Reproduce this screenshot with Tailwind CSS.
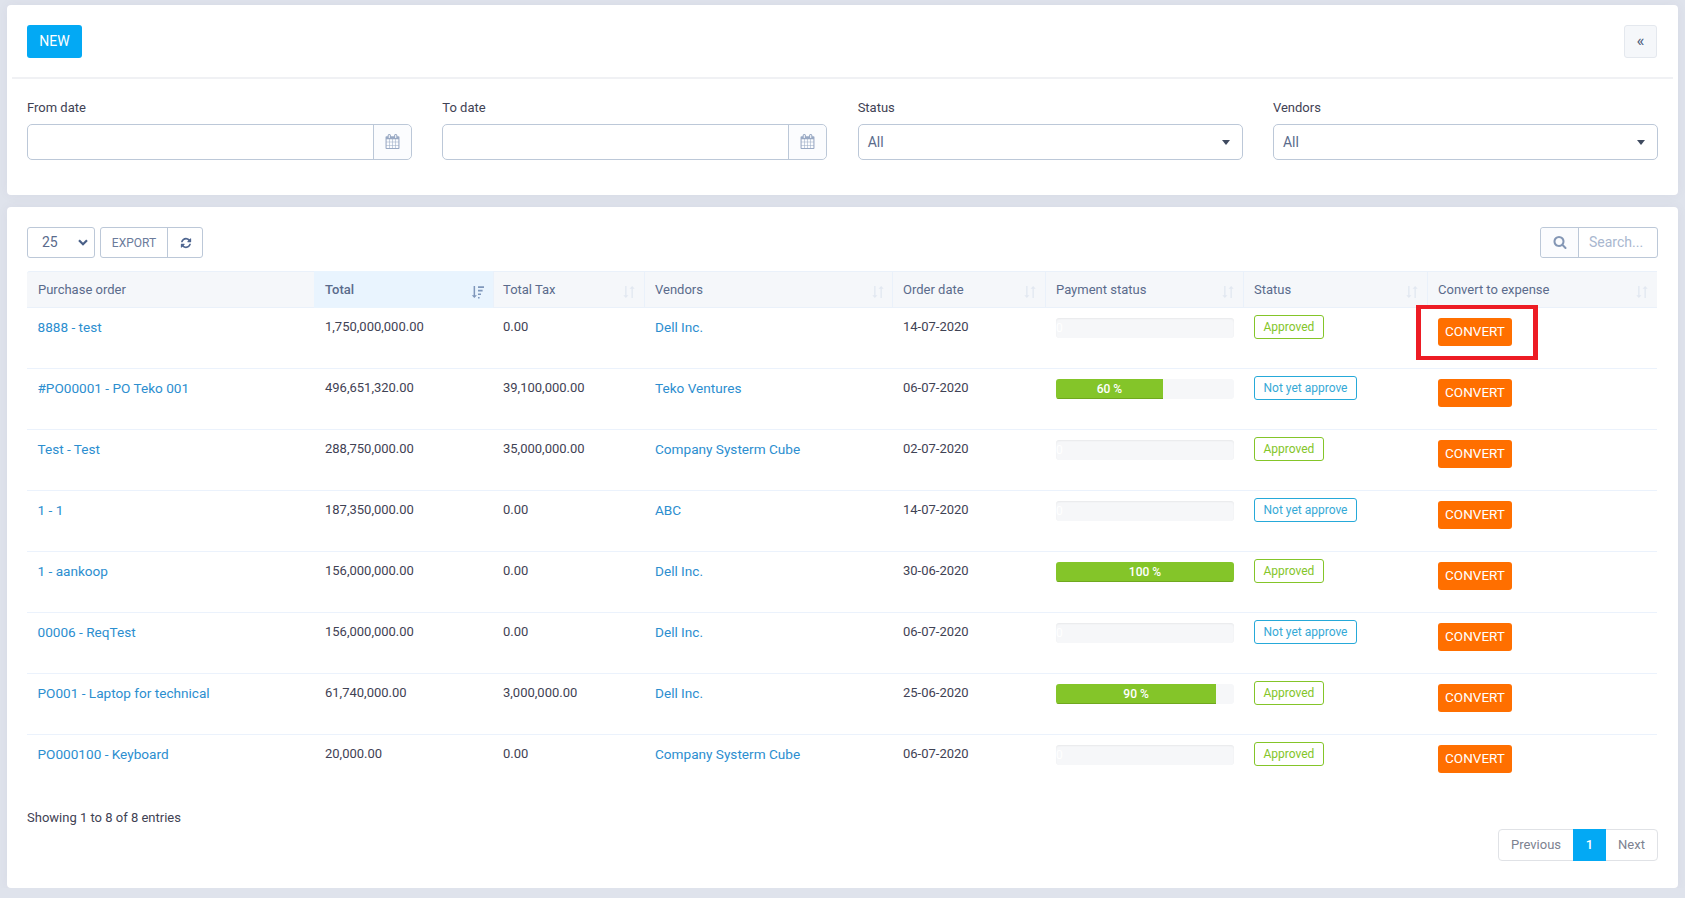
<!DOCTYPE html>
<html>
<head>
<meta charset="utf-8">
<script src="https://cdn.jsdelivr.net/npm/@tailwindcss/browser@4"></script>
<title>Purchase orders</title>
</head>
<body class="bg-[#dfe3ec] font-['Roboto',sans-serif] text-[13px] text-[#3f4254]">
<svg class="hidden" aria-hidden="true">
  <symbol id="cal" viewBox="0 0 1792 1792"><path d="M192 1664h288v-288h-288v288zm352 0h320v-288h-320v288zm-352-352h288v-320h-288v320zm352 0h320v-320h-320v320zm-352-384h288v-288h-288v288zm736 736h320v-288h-320v288zm-384-736h320v-288h-320v288zm768 736h288v-288h-288v288zm-384-352h320v-320h-320v320zm-352-864v-288q0-13-9.5-22.5t-22.5-9.5h-64q-13 0-22.5 9.5t-9.5 22.5v288q0 13 9.5 22.5t22.5 9.5h64q13 0 22.5-9.5t9.5-22.5zm736 864h288v-320h-288v320zm-384-384h320v-288h-320v288zm384 0h288v-288h-288v288zm32-480v-288q0-13-9.5-22.5t-22.5-9.5h-64q-13 0-22.5 9.5t-9.5 22.5v288q0 13 9.5 22.5t22.5 9.5h64q13 0 22.5-9.5t9.5-22.5zm384-64v1280q0 52-38 90t-90 38h-1408q-52 0-90-38t-38-90v-1280q0-52 38-90t90-38h128v-96q0-66 47-113t113-47h64q66 0 113 47t47 113v96h384v-96q0-66 47-113t113-47h64q66 0 113 47t47 113v96h128q52 0 90 38t38 90z"/></symbol>
  <symbol id="srt" viewBox="0 0 14 14"><path d="M3.2 1h1.3v9.2h1.9L3.85 13 1.3 10.2h1.9zM9.5 13h1.3V3.8h1.9L10.15 1 7.6 3.8h1.9z"/></symbol>
</svg>

<main class="flex flex-col gap-3 pt-[5px] px-[7px]">
  <section class="bg-white rounded h-[190px] shadow-[0_0_12px_rgba(82,63,105,0.05)]">
    <div class="mx-[5px] h-[74px] pl-[15px] pr-[16px] pt-5 flex justify-between items-start border-b-2 border-[#f0f1f4]">
      <button class="w-[55px] h-[33px] bg-[#03a9f4] text-white text-[14px] font-normal rounded-[3px]">NEW</button>
      <button class="w-[33px] h-[33px] bg-[#f5f7fa] border border-[#e4e8ee] rounded-[3px] flex items-center justify-center text-[#4a5a78] text-[17px] leading-none pb-[3px]">«</button>
    </div>
    <div class="grid grid-cols-4 gap-x-[30.3px] px-5 pt-[19px]">
      <div>
        <div class="text-[#3f4254] h-[26px] leading-[20px]">From date</div>
        <div class="h-[36px] border border-[#bcc8d8] rounded-[5px] flex justify-end">
          <div class="w-[38px] pb-[2px] border-l border-[#bcc8d8] bg-[#fbfcfe] rounded-r-[5px] flex items-center justify-center"><svg class="w-[15px] h-[15px] fill-[#99a9c4]"><use href="#cal"/></svg></div>
        </div>
      </div>
      <div>
        <div class="text-[#3f4254] h-[26px] leading-[20px]">To date</div>
        <div class="h-[36px] border border-[#bcc8d8] rounded-[5px] flex justify-end">
          <div class="w-[38px] pb-[2px] border-l border-[#bcc8d8] bg-[#fbfcfe] rounded-r-[5px] flex items-center justify-center"><svg class="w-[15px] h-[15px] fill-[#99a9c4]"><use href="#cal"/></svg></div>
        </div>
      </div>
      <div>
        <div class="text-[#3f4254] h-[26px] leading-[20px]">Status</div>
        <div class="h-[36px] border border-[#bcc8d8] rounded-[5px] flex items-center justify-between pl-[10px] pr-[12px] text-[14px] text-[#5a6b8c]">
          <span class="-ml-px">All</span><span class="w-0 h-0 border-x-4 border-x-transparent border-t-[5px] border-t-[#3f4a5f]"></span>
        </div>
      </div>
      <div>
        <div class="text-[#3f4254] h-[26px] leading-[20px]">Vendors</div>
        <div class="h-[36px] border border-[#bcc8d8] rounded-[5px] flex items-center justify-between pl-[10px] pr-[12px] text-[14px] text-[#5a6b8c]">
          <span class="-ml-px">All</span><span class="w-0 h-0 border-x-4 border-x-transparent border-t-[5px] border-t-[#3f4a5f]"></span>
        </div>
      </div>
    </div>
  </section>

  <section class="bg-white rounded h-[681px] px-5 pt-5 shadow-[0_0_12px_rgba(82,63,105,0.05)]">
    <div class="h-[31px] flex justify-between">
      <div class="flex gap-[5px]">
        <div class="w-[68px] border border-[#bcc8d8] rounded-[3px] flex items-center justify-between pl-[14px] pr-[6px] text-[14px] text-[#5a6b8c]">
          <span>25</span>
          <svg class="w-[10px] h-[7px] fill-none stroke-[#4a6088] stroke-[2.2]" viewBox="0 0 10 7"><path d="M1 1.2l4 4 4-4"/></svg>
        </div>
        <div class="flex border border-[#bcc8d8] rounded-[3px] text-[#6b7b9b]">
          <div class="w-[67px] flex items-center justify-center text-[12px] border-r border-[#bcc8d8]">EXPORT</div>
          <div class="w-[34px] flex items-center justify-center pl-px">
            <svg class="w-[12px] h-[12px] fill-[#4f6690]" viewBox="0 0 1792 1792"><path d="M1639 1056q0 5-1 7-64 268-268 434.5t-478 166.5q-146 0-282.5-55t-243.5-157l-129 129q-19 19-45 19t-45-19-19-45v-448q0-26 19-45t45-19h448q26 0 45 19t19 45-19 45l-137 137q71 66 161 102t187 36q134 0 250-65t186-179q11-17 53-117 8-23 30-23h192q13 0 22.5 9.5t9.5 22.5zm25-800v448q0 26-19 45t-45 19h-448q-26 0-45-19t-19-45 19-45l138-138q-148-137-349-137-134 0-250 65t-186 179q-11 17-53 117-8 23-30 23h-199q-13 0-22.5-9.5t-9.5-22.5v-7q65-268 270-434.5t480-166.5q146 0 284 55.5t245 156.5l130-129q19-19 45-19t45 19 19 45z"/></svg>
          </div>
        </div>
      </div>
      <div class="w-[118px] flex border border-[#bcc8d8] rounded-[3px]">
        <div class="w-[38px] pb-[2px] border-r border-[#bcc8d8] bg-[#fbfcfe] rounded-l-[3px] flex items-center justify-center">
          <svg class="w-[14px] h-[14px] fill-[#8497b5]" viewBox="0 0 1792 1792"><path d="M1216 832q0-185-131.5-316.5t-316.5-131.5-316.5 131.5-131.5 316.5 131.5 316.5 316.5 131.5 316.5-131.5 131.5-316.5zm512 832q0 52-38 90t-90 38q-54 0-90-38l-343-342q-179 124-399 124-143 0-273.5-55.5t-225-150-150-225-55.5-273.5 55.5-273.5 150-225 225-150 273.5-55.5 273.5 55.5 225 150 150 225 55.5 273.5q0 220-124 399l343 343q37 37 37 90z"/></svg>
        </div>
        <div class="flex-1 pl-[10px] flex items-center text-[14px] text-[#a9b7cf]">Search...</div>
      </div>
    </div>

    <table class="table-fixed border-separate border-spacing-0 w-[1630px] mt-[13px]">
      <colgroup><col class="w-[287px]"><col class="w-[179px]"><col class="w-[151px]"><col class="w-[248px]"><col class="w-[153px]"><col class="w-[198px]"><col class="w-[184px]"><col class="w-[230px]"></colgroup>
      <thead>
        <tr class="h-[37px] bg-[#f5f7fa] text-left text-[#5a6b8c]">
          <th class="font-normal pl-[11px] border-y border-[#eaf1fa] rounded-tl-[3px]">Purchase order</th>
          <th class="font-medium pl-[11px] bg-[#e9f4fe] border-y border-[#e9f4fe]"><div class="flex items-center justify-between pr-[8px]"><span>Total</span><svg class="w-[14px] h-[14px] fill-[#7f97bb] translate-y-[2px]" viewBox="0 0 14 14"><path d="M2.6 1h1.5v9.2h1.8L3.35 13 .8 10.2h1.8zM7 1.2h6v1.7H7zM7 4.8h4.6v1.7H7zM7 8.4h3v1.7H7zM7 12h1.6v1.4H7z"/></svg></div></th>
          <th class="font-normal pl-[9px] border-y border-l border-[#eaf1fa]"><div class="flex items-center justify-between pr-[8px]"><span>Total Tax</span><svg class="w-[14px] h-[14px] fill-[#e2e8f1] translate-y-[2px]"><use href="#srt"/></svg></div></th>
          <th class="font-normal pl-[10px] border-y border-l border-[#eaf1fa]"><div class="flex items-center justify-between pr-[7px]"><span>Vendors</span><svg class="w-[14px] h-[14px] fill-[#e2e8f1] translate-y-[2px]"><use href="#srt"/></svg></div></th>
          <th class="font-normal pl-[10px] border-y border-l border-[#eaf1fa]"><div class="flex items-center justify-between pr-[8px]"><span>Order date</span><svg class="w-[14px] h-[14px] fill-[#e2e8f1] translate-y-[2px]"><use href="#srt"/></svg></div></th>
          <th class="font-normal pl-[10px] border-y border-l border-[#eaf1fa]"><div class="flex items-center justify-between pr-[8px]"><span>Payment status</span><svg class="w-[14px] h-[14px] fill-[#e2e8f1] translate-y-[2px]"><use href="#srt"/></svg></div></th>
          <th class="font-normal pl-[10px] border-y border-l border-[#eaf1fa]"><div class="flex items-center justify-between pr-[8px]"><span>Status</span><svg class="w-[14px] h-[14px] fill-[#e2e8f1] translate-y-[2px]"><use href="#srt"/></svg></div></th>
          <th class="font-normal pl-[10px] border-y border-l border-[#eaf1fa]"><div class="flex items-center justify-between pr-[8px]"><span>Convert to expense</span><svg class="w-[14px] h-[14px] fill-[#e2e8f1] translate-y-[2px]"><use href="#srt"/></svg></div></th>
        </tr>
      </thead>
      <tbody>
        <tr class="h-[61px] align-top">
          <td class="pl-[10.5px] pt-[9px] text-[13.6px] border-b border-[#ebf2fc]"><a class="text-[#2c8ecf]">8888 - test</a></td>
          <td class="pl-[11px] pt-[9px] border-b border-[#ebf2fc]">1,750,000,000.00</td>
          <td class="pl-[10px] pt-[9px] border-b border-[#ebf2fc]">0.00</td>
          <td class="pl-[11px] pt-[9px] text-[13.6px] border-b border-[#ebf2fc]"><a class="text-[#2c8ecf]">Dell Inc.</a></td>
          <td class="pl-[11px] pt-[9px] border-b border-[#ebf2fc]">14-07-2020</td>
          <td class="pl-[11px] pt-[10px] border-b border-[#ebf2fc]"><div class="w-[178px] h-[20px] bg-[#f6f7f9] rounded-[3px] shadow-[inset_0_1px_2px_rgba(0,0,0,0.06)]"><span class="block text-[12px] leading-[20px] text-white">0</span></div></td>
          <td class="pl-[11px] pt-[7px] border-b border-[#ebf2fc]"><span class="inline-flex items-center h-[24px] px-[8.5px] text-[12px] text-[#84c529] border border-[#84c529] rounded-[3px]">Approved</span></td>
          <td class="relative pl-[11px] pt-[10px] border-b border-[#ebf2fc]">
            <button class="w-[74px] h-[28px] pb-[2px] bg-[#ff6f00] text-white text-[13.5px] rounded-[3px]">CONVERT</button>
            <div class="absolute left-[-11px] top-[-3px] w-[122px] h-[55px] border-x-[5px] border-y-4 border-[#ed1c24]"></div>
          </td>
        </tr>
        <tr class="h-[61px] align-top">
          <td class="pl-[10.5px] pt-[9px] text-[13.6px] border-b border-[#ebf2fc]"><a class="text-[#2c8ecf]">#PO00001 - PO Teko 001</a></td>
          <td class="pl-[11px] pt-[9px] border-b border-[#ebf2fc]">496,651,320.00</td>
          <td class="pl-[10px] pt-[9px] border-b border-[#ebf2fc]">39,100,000.00</td>
          <td class="pl-[11px] pt-[9px] text-[13.6px] border-b border-[#ebf2fc]"><a class="text-[#2c8ecf]">Teko Ventures</a></td>
          <td class="pl-[11px] pt-[9px] border-b border-[#ebf2fc]">06-07-2020</td>
          <td class="pl-[11px] pt-[10px] border-b border-[#ebf2fc]"><div class="w-[178px] h-[20px] bg-[#f6f7f9] rounded-[3px] overflow-hidden"><div class="h-full w-[60%] bg-[#84c529] border-b border-[#6fa81f] text-white text-[12px] font-medium text-center leading-[20px]">60 %</div></div></td>
          <td class="pl-[11px] pt-[7px] border-b border-[#ebf2fc]"><span class="inline-flex items-center h-[24px] px-[8.5px] text-[12px] text-[#36a9d6] border border-[#26a9d9] rounded-[3px]">Not yet approve</span></td>
          <td class="pl-[11px] pt-[10px] border-b border-[#ebf2fc]"><button class="w-[74px] h-[28px] pb-[2px] bg-[#ff6f00] text-white text-[13.5px] rounded-[3px]">CONVERT</button></td>
        </tr>
        <tr class="h-[61px] align-top">
          <td class="pl-[10.5px] pt-[9px] text-[13.6px] border-b border-[#ebf2fc]"><a class="text-[#2c8ecf]">Test - Test</a></td>
          <td class="pl-[11px] pt-[9px] border-b border-[#ebf2fc]">288,750,000.00</td>
          <td class="pl-[10px] pt-[9px] border-b border-[#ebf2fc]">35,000,000.00</td>
          <td class="pl-[11px] pt-[9px] text-[13.6px] border-b border-[#ebf2fc]"><a class="text-[#2c8ecf]">Company Systerm Cube</a></td>
          <td class="pl-[11px] pt-[9px] border-b border-[#ebf2fc]">02-07-2020</td>
          <td class="pl-[11px] pt-[10px] border-b border-[#ebf2fc]"><div class="w-[178px] h-[20px] bg-[#f6f7f9] rounded-[3px] shadow-[inset_0_1px_2px_rgba(0,0,0,0.06)]"><span class="block text-[12px] leading-[20px] text-white">0</span></div></td>
          <td class="pl-[11px] pt-[7px] border-b border-[#ebf2fc]"><span class="inline-flex items-center h-[24px] px-[8.5px] text-[12px] text-[#84c529] border border-[#84c529] rounded-[3px]">Approved</span></td>
          <td class="pl-[11px] pt-[10px] border-b border-[#ebf2fc]"><button class="w-[74px] h-[28px] pb-[2px] bg-[#ff6f00] text-white text-[13.5px] rounded-[3px]">CONVERT</button></td>
        </tr>
        <tr class="h-[61px] align-top">
          <td class="pl-[10.5px] pt-[9px] text-[13.6px] border-b border-[#ebf2fc]"><a class="text-[#2c8ecf]">1 - 1</a></td>
          <td class="pl-[11px] pt-[9px] border-b border-[#ebf2fc]">187,350,000.00</td>
          <td class="pl-[10px] pt-[9px] border-b border-[#ebf2fc]">0.00</td>
          <td class="pl-[11px] pt-[9px] text-[13.6px] border-b border-[#ebf2fc]"><a class="text-[#2c8ecf]">ABC</a></td>
          <td class="pl-[11px] pt-[9px] border-b border-[#ebf2fc]">14-07-2020</td>
          <td class="pl-[11px] pt-[10px] border-b border-[#ebf2fc]"><div class="w-[178px] h-[20px] bg-[#f6f7f9] rounded-[3px] shadow-[inset_0_1px_2px_rgba(0,0,0,0.06)]"><span class="block text-[12px] leading-[20px] text-white">0</span></div></td>
          <td class="pl-[11px] pt-[7px] border-b border-[#ebf2fc]"><span class="inline-flex items-center h-[24px] px-[8.5px] text-[12px] text-[#36a9d6] border border-[#26a9d9] rounded-[3px]">Not yet approve</span></td>
          <td class="pl-[11px] pt-[10px] border-b border-[#ebf2fc]"><button class="w-[74px] h-[28px] pb-[2px] bg-[#ff6f00] text-white text-[13.5px] rounded-[3px]">CONVERT</button></td>
        </tr>
        <tr class="h-[61px] align-top">
          <td class="pl-[10.5px] pt-[9px] text-[13.6px] border-b border-[#ebf2fc]"><a class="text-[#2c8ecf]">1 - aankoop</a></td>
          <td class="pl-[11px] pt-[9px] border-b border-[#ebf2fc]">156,000,000.00</td>
          <td class="pl-[10px] pt-[9px] border-b border-[#ebf2fc]">0.00</td>
          <td class="pl-[11px] pt-[9px] text-[13.6px] border-b border-[#ebf2fc]"><a class="text-[#2c8ecf]">Dell Inc.</a></td>
          <td class="pl-[11px] pt-[9px] border-b border-[#ebf2fc]">30-06-2020</td>
          <td class="pl-[11px] pt-[10px] border-b border-[#ebf2fc]"><div class="w-[178px] h-[20px] bg-[#f6f7f9] rounded-[3px] overflow-hidden"><div class="h-full w-full bg-[#84c529] border-b border-[#6fa81f] text-white text-[12px] font-medium text-center leading-[20px]">100 %</div></div></td>
          <td class="pl-[11px] pt-[7px] border-b border-[#ebf2fc]"><span class="inline-flex items-center h-[24px] px-[8.5px] text-[12px] text-[#84c529] border border-[#84c529] rounded-[3px]">Approved</span></td>
          <td class="pl-[11px] pt-[10px] border-b border-[#ebf2fc]"><button class="w-[74px] h-[28px] pb-[2px] bg-[#ff6f00] text-white text-[13.5px] rounded-[3px]">CONVERT</button></td>
        </tr>
        <tr class="h-[61px] align-top">
          <td class="pl-[10.5px] pt-[9px] text-[13.6px] border-b border-[#ebf2fc]"><a class="text-[#2c8ecf]">00006 - ReqTest</a></td>
          <td class="pl-[11px] pt-[9px] border-b border-[#ebf2fc]">156,000,000.00</td>
          <td class="pl-[10px] pt-[9px] border-b border-[#ebf2fc]">0.00</td>
          <td class="pl-[11px] pt-[9px] text-[13.6px] border-b border-[#ebf2fc]"><a class="text-[#2c8ecf]">Dell Inc.</a></td>
          <td class="pl-[11px] pt-[9px] border-b border-[#ebf2fc]">06-07-2020</td>
          <td class="pl-[11px] pt-[10px] border-b border-[#ebf2fc]"><div class="w-[178px] h-[20px] bg-[#f6f7f9] rounded-[3px] shadow-[inset_0_1px_2px_rgba(0,0,0,0.06)]"><span class="block text-[12px] leading-[20px] text-white">0</span></div></td>
          <td class="pl-[11px] pt-[7px] border-b border-[#ebf2fc]"><span class="inline-flex items-center h-[24px] px-[8.5px] text-[12px] text-[#36a9d6] border border-[#26a9d9] rounded-[3px]">Not yet approve</span></td>
          <td class="pl-[11px] pt-[10px] border-b border-[#ebf2fc]"><button class="w-[74px] h-[28px] pb-[2px] bg-[#ff6f00] text-white text-[13.5px] rounded-[3px]">CONVERT</button></td>
        </tr>
        <tr class="h-[61px] align-top">
          <td class="pl-[10.5px] pt-[9px] text-[13.6px] border-b border-[#ebf2fc]"><a class="text-[#2c8ecf]">PO001 - Laptop for technical</a></td>
          <td class="pl-[11px] pt-[9px] border-b border-[#ebf2fc]">61,740,000.00</td>
          <td class="pl-[10px] pt-[9px] border-b border-[#ebf2fc]">3,000,000.00</td>
          <td class="pl-[11px] pt-[9px] text-[13.6px] border-b border-[#ebf2fc]"><a class="text-[#2c8ecf]">Dell Inc.</a></td>
          <td class="pl-[11px] pt-[9px] border-b border-[#ebf2fc]">25-06-2020</td>
          <td class="pl-[11px] pt-[10px] border-b border-[#ebf2fc]"><div class="w-[178px] h-[20px] bg-[#f6f7f9] rounded-[3px] overflow-hidden"><div class="h-full w-[90%] bg-[#84c529] border-b border-[#6fa81f] text-white text-[12px] font-medium text-center leading-[20px]">90 %</div></div></td>
          <td class="pl-[11px] pt-[7px] border-b border-[#ebf2fc]"><span class="inline-flex items-center h-[24px] px-[8.5px] text-[12px] text-[#84c529] border border-[#84c529] rounded-[3px]">Approved</span></td>
          <td class="pl-[11px] pt-[10px] border-b border-[#ebf2fc]"><button class="w-[74px] h-[28px] pb-[2px] bg-[#ff6f00] text-white text-[13.5px] rounded-[3px]">CONVERT</button></td>
        </tr>
        <tr class="h-[61px] align-top">
          <td class="pl-[10.5px] pt-[9px] text-[13.6px]"><a class="text-[#2c8ecf]">PO000100 - Keyboard</a></td>
          <td class="pl-[11px] pt-[9px]">20,000.00</td>
          <td class="pl-[10px] pt-[9px]">0.00</td>
          <td class="pl-[11px] pt-[9px] text-[13.6px]"><a class="text-[#2c8ecf]">Company Systerm Cube</a></td>
          <td class="pl-[11px] pt-[9px]">06-07-2020</td>
          <td class="pl-[11px] pt-[10px]"><div class="w-[178px] h-[20px] bg-[#f6f7f9] rounded-[3px] shadow-[inset_0_1px_2px_rgba(0,0,0,0.06)]"><span class="block text-[12px] leading-[20px] text-white">0</span></div></td>
          <td class="pl-[11px] pt-[7px]"><span class="inline-flex items-center h-[24px] px-[8.5px] text-[12px] text-[#84c529] border border-[#84c529] rounded-[3px]">Approved</span></td>
          <td class="pl-[11px] pt-[10px]"><button class="w-[74px] h-[28px] pb-[2px] bg-[#ff6f00] text-white text-[13.5px] rounded-[3px]">CONVERT</button></td>
        </tr>
      </tbody>
    </table>

    <div class="flex justify-between items-start mt-[13px]">
      <div class="leading-[18px]">Showing 1 to 8 of 8 entries</div>
      <div class="flex h-[32px] mt-[20px] border border-[#e0e2e6] rounded-[4px] text-[#7d8290]">
        <div class="w-[74px] flex items-center justify-center">Previous</div>
        <div class="w-[33px] flex items-center justify-center bg-[#03a9f4] text-white font-medium -my-px">1</div>
        <div class="w-[51px] flex items-center justify-center">Next</div>
      </div>
    </div>
  </section>
</main>
</body>
</html>
